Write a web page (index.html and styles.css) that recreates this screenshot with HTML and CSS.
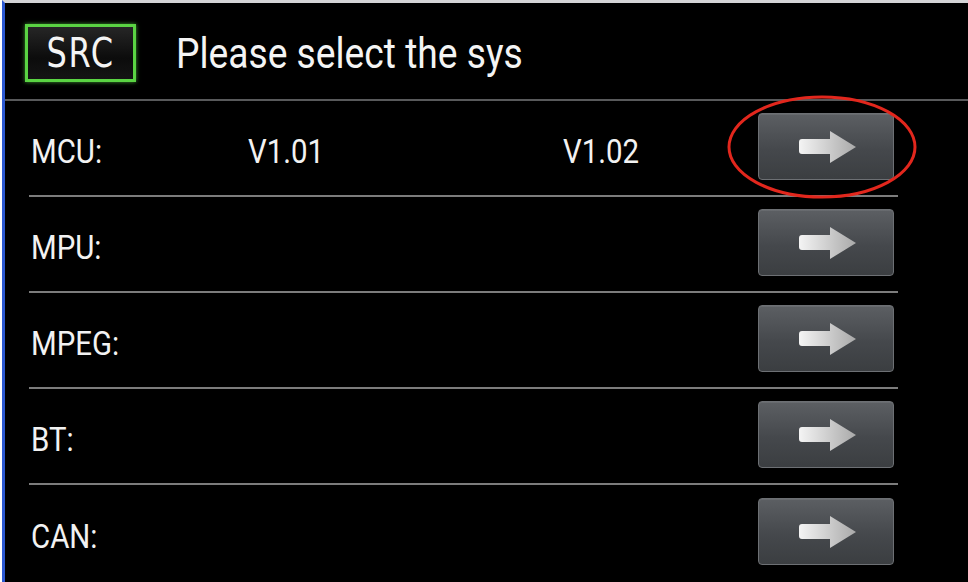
FILE: index.html
```html
<!DOCTYPE html>
<html>
<head>
<meta charset="utf-8">
<link rel="stylesheet" href="styles.css">
</head>
<body>
<div class="frame">
  <div class="screen">
    <header class="header">
      <div class="src"><span>SRC</span></div>
      <h1 class="title"><span>Please select the sys</span></h1>
    </header>
    <ul class="list">
      <li class="row">
        <span class="label"><span>MCU:</span></span>
        <span class="val"><span>V1.01</span></span>
        <span class="val"><span>V1.02</span></span>
        <button class="go"><svg width="58" height="32" viewBox="0 0 58 32"><defs><linearGradient id="ag" x1="0" x2="1" y1="0" y2="0"><stop offset="0" stop-color="#f4f4f4"/><stop offset="1" stop-color="#a9a9a9"/></linearGradient></defs><path d="M3,8 H31 V0 L57,16 L31,32 V23 H3 Q0,23 0,20 V11 Q0,8 3,8 Z" fill="url(#ag)"/></svg></button>
      </li>
      <li class="row">
        <span class="label"><span>MPU:</span></span>
        <span class="val"></span>
        <span class="val"></span>
        <button class="go"><svg width="58" height="32" viewBox="0 0 58 32"><path d="M3,8 H31 V0 L57,16 L31,32 V23 H3 Q0,23 0,20 V11 Q0,8 3,8 Z" fill="url(#ag)"/></svg></button>
      </li>
      <li class="row">
        <span class="label"><span>MPEG:</span></span>
        <span class="val"></span>
        <span class="val"></span>
        <button class="go"><svg width="58" height="32" viewBox="0 0 58 32"><path d="M3,8 H31 V0 L57,16 L31,32 V23 H3 Q0,23 0,20 V11 Q0,8 3,8 Z" fill="url(#ag)"/></svg></button>
      </li>
      <li class="row">
        <span class="label"><span>BT:</span></span>
        <span class="val"></span>
        <span class="val"></span>
        <button class="go"><svg width="58" height="32" viewBox="0 0 58 32"><path d="M3,8 H31 V0 L57,16 L31,32 V23 H3 Q0,23 0,20 V11 Q0,8 3,8 Z" fill="url(#ag)"/></svg></button>
      </li>
      <li class="row last">
        <span class="label"><span>CAN:</span></span>
        <span class="val"></span>
        <span class="val"></span>
        <button class="go"><svg width="58" height="32" viewBox="0 0 58 32"><path d="M3,8 H31 V0 L57,16 L31,32 V23 H3 Q0,23 0,20 V11 Q0,8 3,8 Z" fill="url(#ag)"/></svg></button>
      </li>
    </ul>
    <svg class="mark" width="194" height="108" viewBox="0 0 194 108"><ellipse cx="97" cy="54" rx="93" ry="50" fill="none" stroke="#e2271d" stroke-width="3"/></svg>
  </div>
</div>
</body>
</html>
```
FILE: styles.css
```css
html, body {
  margin: 0;
  padding: 0;
  background: #fff;
  width: 968px;
  height: 582px;
  overflow: hidden;
}
.frame {
  padding-left: 2px;
  background: #fff;
  height: 582px;
  box-sizing: border-box;
}
.screen {
  position: relative;
  height: 582px;
  box-sizing: border-box;
  border-top: 3px solid #d4d4d6;
  border-left: 3px solid #2c59d2;
  background: #000;
  color: #f2f2f2;
  font-family: "Roboto", "Liberation Sans", sans-serif;
  overflow: hidden;
}
.header {
  height: 98px;
  box-sizing: border-box;
  border-bottom: 2px solid #58595b;
  display: flex;
  align-items: flex-start;
  padding: 21px 0 0 20px;
}
.src {
  width: 111px;
  height: 58px;
  box-sizing: border-box;
  border: 3px solid #5ad443;
  box-shadow: 0 0 4px rgba(90, 220, 70, 0.7);
  background: linear-gradient(#262626, #0c0c0c 60%, #141414);
  display: flex;
  align-items: center;
  justify-content: center;
}
.src span {
  display: inline-block;
  font-family: "DejaVu Sans", sans-serif;
  font-weight: normal;
  font-size: 40px;
  letter-spacing: 2px;
  color: #f4f4f4;
  transform: scaleX(0.8);
  line-height: 1;
}
.title {
  margin: 0 0 0 40px;
  font-weight: normal;
  font-size: 43px;
  line-height: 58px;
  color: #f4f4f4;
}
.title span,
.label span,
.val span {
  display: inline-block;
  transform: scaleX(0.865);
  transform-origin: 0 50%;
  white-space: nowrap;
}
.list {
  list-style: none;
  margin: 0 0 0 24px;
  padding: 0;
  width: 869px;
}
.row {
  height: 96px;
  box-sizing: border-box;
  border-bottom: 2px solid #7c7c7c;
  display: grid;
  grid-template-columns: 217px 315px 1fr 136px;
  align-items: center;
  padding-left: 2px;
  padding-right: 4px;
  font-size: 34px;
}
.row.last {
  border-bottom: none;
}
.label, .val {
  display: block;
  line-height: 1;
  padding-top: 5px;
}
.go {
  width: 136px;
  height: 67px;
  box-sizing: border-box;
  border: 1px solid #6d7074;
  border-radius: 4px;
  background: linear-gradient(#5c5f63, #45484c 55%, #3b3e41);
  box-shadow: inset 0 1px 0 rgba(255,255,255,0.08);
  display: flex;
  align-items: center;
  justify-content: center;
  padding: 0 0 0 4px;
  margin-top: -3px;
}
.go svg {
  display: block;
}
.mark {
  position: absolute;
  left: 720px;
  top: 90px;
}
```
